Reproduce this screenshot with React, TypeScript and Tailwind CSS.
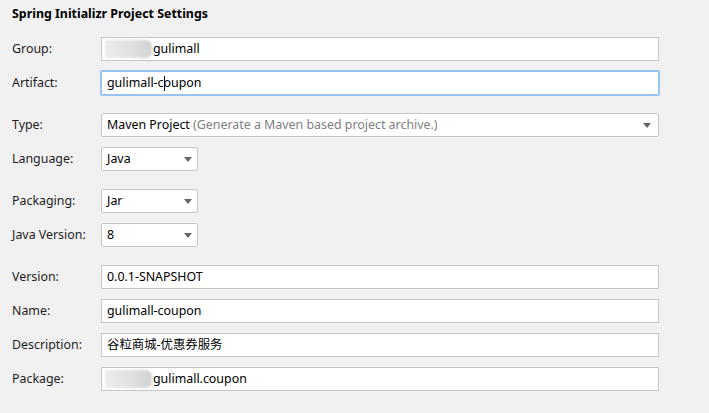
import React from 'react';

const font = { fontFamily: '"Noto Sans", "Noto Sans CJK SC", sans-serif' };

// --- small building blocks ---
const Row = ({ label, className = '', children }: { label: string; className?: string; children: React.ReactNode }) => (
  <div className={`flex items-center h-6 ${className}`}>
    <label className="w-[89px] shrink-0 text-[12.4px] text-[#1e1e1e]">{label}</label>
    {children}
  </div>
);

const TextBox = ({ children }: { children: React.ReactNode }) => (
  <div className="flex items-center w-[558px] h-6 border border-[#c6c6c6] bg-white px-[5px] text-[12.4px] text-black whitespace-nowrap">
    {children}
  </div>
);

const Redacted = () => (
  <span className="block w-[47px] h-[18px] -ml-[2px] mr-px bg-gradient-to-r from-[#ececec] via-[#e2e2e2] to-[#d2d2d2] blur-[1px] rounded-r-md" />
);

const Arrow = () => (
  <svg width="8" height="5" viewBox="0 0 8 5" className="shrink-0">
    <path d="M0 0 H8 L4 5 Z" fill="#666666" />
  </svg>
);

const Select = ({ value, wide = false, hint }: { value: string; wide?: boolean; hint?: string }) => (
  <div
    className={`flex items-center justify-between h-6 rounded-[2px] border border-[#c6c6c6] bg-white text-[12.4px] text-black pl-[5px] ${
      wide ? 'w-[558px] pr-[7px]' : 'w-[97px] pr-[5px]'
    }`}
  >
    <span className="whitespace-nowrap">
      {value}
      {hint && <span className="text-[#808080]"> {hint}</span>}
    </span>
    <Arrow />
  </div>
);

export default function App() {
  return (
    <div className="w-[709px] h-[413px] bg-[#f1f1f1] pl-3 pt-[5px]" style={font}>
      <h1 className="text-[12.4px] font-bold leading-[18px] text-black">Spring Initializr Project Settings</h1>

      <Row label="Group:" className="mt-[14px]">
        <TextBox>
          <Redacted />
          gulimall
        </TextBox>
      </Row>

      <Row label="Artifact:" className="mt-[10px]">
        <div className="flex items-center w-[560px] h-[26px] -ml-px border-2 border-[#99c4f1] rounded-[2px] bg-white px-[5px] text-[12.4px] text-black">
          gulimall-c
          <span className="inline-block w-px h-[15px] bg-black -mr-px" />
          oupon
        </div>
      </Row>

      <Row label="Type:" className="mt-[18px]">
        <Select value="Maven Project" hint="(Generate a Maven based project archive.)" wide />
      </Row>
      <Row label="Language:" className="mt-[10px]">
        <Select value="Java" />
      </Row>

      <Row label="Packaging:" className="mt-[18px]">
        <Select value="Jar" />
      </Row>
      <Row label="Java Version:" className="mt-[10px]">
        <Select value="8" />
      </Row>

      <Row label="Version:" className="mt-[18px]">
        <TextBox>0.0.1-SNAPSHOT</TextBox>
      </Row>
      <Row label="Name:" className="mt-[10px]">
        <TextBox>gulimall-coupon</TextBox>
      </Row>
      <Row label="Description:" className="mt-[10px]">
        <TextBox>谷粒商城-优惠券服务</TextBox>
      </Row>
      <Row label="Package:" className="mt-[10px]">
        <TextBox>
          <Redacted />
          gulimall.coupon
        </TextBox>
      </Row>
    </div>
  );
}
